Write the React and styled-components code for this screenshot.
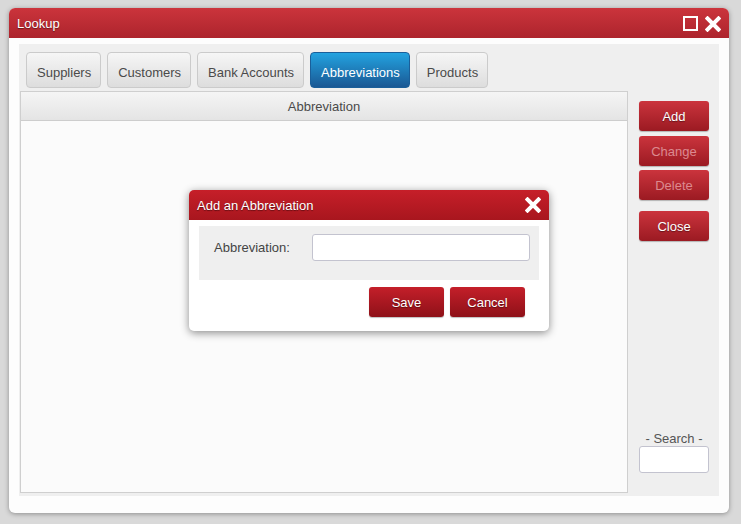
import React from "react";
import styled, { createGlobalStyle } from "styled-components";

const GlobalStyle = createGlobalStyle`
  html, body {
    margin: 0;
    padding: 0;
    background: #d9d9d9;
    font-family: "Liberation Sans", Arial, sans-serif;
  }
  body {
    padding: 8px 0 0 9px;
    height: 524px;
    box-sizing: border-box;
    overflow: hidden;
  }
`;

const Window = styled.div`
  position: relative;
  width: 720px;
  height: 505px;
  display: flex;
  flex-direction: column;
  background: #fdfdfd;
  border-radius: 6px;
  box-shadow: 0 1px 5px rgba(0, 0, 0, 0.35);
  overflow: hidden;
`;

const TitleBar = styled.div`
  height: 30px;
  flex-shrink: 0;
  display: flex;
  align-items: center;
  justify-content: space-between;
  padding: 0 8px;
  background: linear-gradient(#cb343c, #ad242d);
  color: #fff;
  font-size: 13px;
  text-shadow: 0 1px 1px rgba(0, 0, 0, 0.45);
`;

const DialogTitle = styled(TitleBar)`
  background: linear-gradient(#c61f29, #a8161e);
`;

const TitleIcons = styled.div`
  display: flex;
  align-items: center;
  gap: 7px;
  margin-top: 1px;
`;

const WindowBody = styled.div`
  flex: 1;
  display: flex;
  padding: 6px 10px 17px 10px;
`;

const Panel = styled.div`
  flex: 1;
  display: flex;
  flex-direction: column;
  background: #efefef;
  padding: 8px 10px 3px 1px;
`;

const Tabs = styled.div`
  display: flex;
  gap: 6px;
  padding-left: 6px;
  margin-bottom: 3px;
`;

const Tab = styled.div`
  height: 36px;
  box-sizing: border-box;
  display: flex;
  align-items: center;
  padding: 5px 9px 0 10px;
  border-radius: 4px;
  font-size: 13px;
  border: 1px solid ${({ $active }) => ($active ? "#1a5f9a" : "#cbcbcb")};
  color: ${({ $active }) => ($active ? "#fff" : "#4a4a4a")};
  background: ${({ $active }) =>
    $active
      ? "linear-gradient(#23a3e0, #1a5894)"
      : "linear-gradient(#f6f6f6, #dddddd)"};
`;

const Content = styled.div`
  flex: 1;
  display: flex;
`;

const Grid = styled.div`
  flex: 1;
  display: flex;
  flex-direction: column;
  border: 1px solid #cfcfcf;
  background: #fbfbfb;
`;

const GridHeader = styled.div`
  height: 28px;
  display: flex;
  align-items: center;
  justify-content: center;
  font-size: 13px;
  color: #4a4a4a;
  background: linear-gradient(#f5f5f5, #e4e4e4);
  border-bottom: 1px solid #cdcdcd;
`;

const Sidebar = styled.div`
  width: 70px;
  margin-left: 11px;
  padding: 10px 0 20px;
  display: flex;
  flex-direction: column;
`;

const Button = styled.button`
  width: ${({ $w }) => $w || 70}px;
  height: 30px;
  margin-top: ${({ $mt }) => $mt || 0}px;
  border: none;
  border-radius: 3px;
  padding: 0;
  font-family: inherit;
  font-size: 13px;
  color: ${({ disabled }) => (disabled ? "#dc8a90" : "#fff")};
  text-shadow: ${({ disabled }) =>
    disabled ? "none" : "0 1px 1px rgba(0,0,0,0.4)"};
  background: linear-gradient(#cb343d, #9b1a22);
  box-shadow: 0 1px 1px rgba(0, 0, 0, 0.25);
`;

const DialogButton = styled(Button)`
  background: linear-gradient(#c41f2a, #8e1118);
`;

const Spacer = styled.div`
  flex: 1;
`;

const SearchLabel = styled.div`
  text-align: center;
  font-size: 13px;
  color: #555;
  margin-top: 1px;
`;

const Input = styled.input`
  width: ${({ $w }) => $w}px;
  height: 27px;
  box-sizing: border-box;
  border: 1px solid #c3c3cf;
  border-radius: 3px;
  background: #fff;
  outline: none;
`;

const Dialog = styled.div`
  position: absolute;
  left: 180px;
  top: 182px;
  width: 360px;
  height: 141px;
  display: flex;
  flex-direction: column;
  background: #fff;
  border-radius: 5px;
  overflow: hidden;
  box-shadow: 0 2px 8px rgba(0, 0, 0, 0.45);
`;

const DialogBody = styled.div`
  padding: 6px 10px 0;
`;

const FieldArea = styled.div`
  height: 54px;
  box-sizing: border-box;
  display: flex;
  align-items: flex-start;
  padding: 8px 9px 0 15px;
  background: #efefef;
`;

const Label = styled.label`
  width: 98px;
  line-height: 27px;
  font-size: 13px;
  color: #444;
`;

const DialogActions = styled.div`
  display: flex;
  justify-content: flex-end;
  gap: 6px;
  padding: 7px 14px 0 0;
`;

const MaxIcon = () => (
  <svg width="15" height="15" viewBox="0 0 15 15">
    <rect x="1" y="1" width="13" height="13" fill="none" stroke="#fff" strokeWidth="2" />
  </svg>
);

const CloseIcon = () => (
  <svg width="16" height="16" viewBox="0 0 16 16">
    <path
      d="M2.5 2.5 L13.5 13.5 M13.5 2.5 L2.5 13.5"
      stroke="#fff"
      strokeWidth="4"
      strokeLinecap="square"
    />
  </svg>
);

const tabs = ["Suppliers", "Customers", "Bank Accounts", "Abbreviations", "Products"];

const App = () => {
  return (
    <>
      <GlobalStyle />
      <Window>
        <TitleBar>
          <span>Lookup</span>
          <TitleIcons>
            <MaxIcon />
            <CloseIcon />
          </TitleIcons>
        </TitleBar>
        <WindowBody>
          <Panel>
            <Tabs>
              {tabs.map((t) => (
                <Tab key={t} $active={t === "Abbreviations"}>
                  {t}
                </Tab>
              ))}
            </Tabs>
            <Content>
              <Grid>
                <GridHeader>Abbreviation</GridHeader>
              </Grid>
              <Sidebar>
                <Button>Add</Button>
                <Button $mt={5} disabled>
                  Change
                </Button>
                <Button $mt={4} disabled>
                  Delete
                </Button>
                <Button $mt={11}>Close</Button>
                <Spacer />
                <SearchLabel>- Search -</SearchLabel>
                <Input $w={70} />
              </Sidebar>
            </Content>
          </Panel>
        </WindowBody>
        <Dialog>
          <DialogTitle>
            <span>Add an Abbreviation</span>
            <CloseIcon />
          </DialogTitle>
          <DialogBody>
            <FieldArea>
              <Label>Abbreviation:</Label>
              <Input $w={218} />
            </FieldArea>
            <DialogActions>
              <DialogButton $w={75}>Save</DialogButton>
              <DialogButton $w={75}>Cancel</DialogButton>
            </DialogActions>
          </DialogBody>
        </Dialog>
      </Window>
    </>
  );
};

export default App;
